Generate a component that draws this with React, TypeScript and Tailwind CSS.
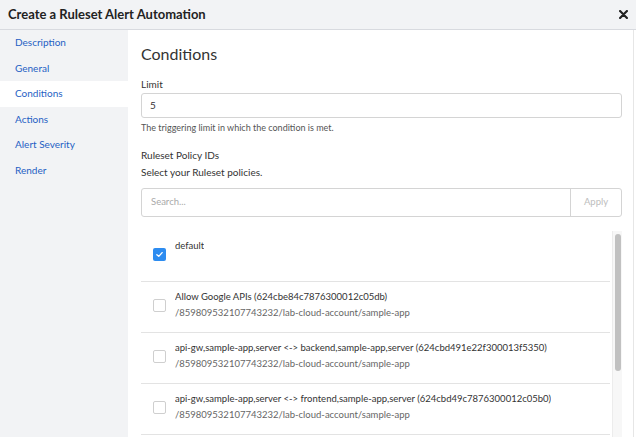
import React from "react";

type Policy = {
	id: string;
	title: string;
	path?: string;
	checked?: boolean;
};

const navItems = ["Description", "General", "Conditions", "Actions", "Alert Severity", "Render"];

const policies: Policy[] = [
	{ id: "default", title: "default", checked: true },
	{
		id: "624cbe84c7876300012c05db",
		title: "Allow Google APIs (624cbe84c7876300012c05db)",
		path: "/859809532107743232/lab-cloud-account/sample-app",
	},
	{
		id: "624cbd491e22f300013f5350",
		title: "api-gw,sample-app,server <-> backend,sample-app,server (624cbd491e22f300013f5350)",
		path: "/859809532107743232/lab-cloud-account/sample-app",
	},
	{
		id: "624cbd49c7876300012c05b0",
		title: "api-gw,sample-app,server <-> frontend,sample-app,server (624cbd49c7876300012c05b0)",
		path: "/859809532107743232/lab-cloud-account/sample-app",
	},
];

function Checkbox({ checked }: { checked?: boolean }) {
	if (checked) {
		return (
			<span className="flex h-[13px] w-[13px] shrink-0 items-center justify-center rounded-[2px] bg-[#2d8cf0]">
				<svg viewBox="0 0 12 12" className="h-[9px] w-[9px]">
					<path d="M2.5 6.2 L5 8.5 L9.5 3.5" fill="none" stroke="white" strokeWidth="1.8" strokeLinecap="round" strokeLinejoin="round" />
				</svg>
			</span>
		);
	}
	return <span className="h-[13px] w-[13px] shrink-0 rounded-[2px] border border-[#cfcfcf] bg-white" />;
}

export default function App() {
	return (
		<div className="flex h-[437px] w-[636px] flex-col overflow-hidden bg-white font-['Lato',sans-serif] text-[#333]">
			<header className="flex h-[30px] shrink-0 items-center justify-between border-b border-[#d8dadf] bg-[#f2f3f5] pl-[8px] pr-[8px]">
				<h1 className="text-[13px] font-bold text-[#222]">Create a Ruleset Alert Automation</h1>
				<svg viewBox="0 0 10 10" className="h-[9px] w-[9px]">
					<path d="M1.2 1.2 L8.8 8.8 M8.8 1.2 L1.2 8.8" stroke="#222" strokeWidth="2.4" strokeLinecap="round" />
				</svg>
			</header>

			<div className="flex min-h-0 flex-1">
				<nav className="w-[128px] shrink-0 bg-[#f2f3f5]">
					{navItems.map((item) => (
						<div
							key={item}
							className={`flex h-[25.5px] items-center pl-[15px] text-[10px] text-[#1f5fc4] ${
								item === "Conditions" ? "bg-white" : ""
							}`}
						>
							{item}
						</div>
					))}
				</nav>

				<main className="min-w-0 flex-1 pl-[13px] pr-[11px]">
					<h2 className="mt-[13px] text-[16px] leading-[22px] text-[#333]">Conditions</h2>

					<label className="mt-[12px] block text-[10px] leading-[14px] text-[#333]">Limit</label>
					<div className="mt-[2px] flex h-[25px] items-center rounded-[3px] border border-[#d4d4d4] px-[8px] text-[10px] text-[#333]">
						5
					</div>
					<p className="mt-[3px] text-[9px] leading-[14px] text-[#555]">
						The triggering limit in which the condition is met.
					</p>

					<p className="mt-[13px] text-[10px] leading-[14px] text-[#333]">Ruleset Policy IDs</p>
					<p className="mt-[3px] text-[10px] leading-[14px] text-[#333]">Select your Ruleset policies.</p>

					<div className="mt-[9px] flex h-[29px] rounded-[3px] border border-[#d4d4d4]">
						<div className="flex flex-1 items-center px-[9px] text-[9.5px] text-[#a9a9a9]">Search...</div>
						<div className="flex w-[51px] items-center justify-center border-l border-[#d4d4d4] text-[9.5px] text-[#bdbdbd]">
							Apply
						</div>
					</div>

					<div className="mt-[14px] flex h-[300px]">
						<ul className="min-w-0 flex-1 pr-[2px]">
							{policies.map((policy) => (
								<li key={policy.id} className="flex h-[51px] items-start border-b border-[#e3e3e3] pl-[12px] pt-[7px]">
									<div className="flex h-[32px] items-center">
										<Checkbox checked={policy.checked} />
									</div>
									<div className="ml-[9px] min-w-0 text-[9.5px] leading-[16px]">
										<div className="truncate text-[#333]">{policy.title}</div>
										{policy.path && <div className="truncate text-[#666]">{policy.path}</div>}
									</div>
								</li>
							))}
						</ul>
						<div className="w-[10px] shrink-0 border-l border-[#ececec] bg-[#f7f7f7] px-[1.5px] pt-[3px]">
							<div className="h-[137px] w-full rounded-full bg-[#c1c1c1]" />
						</div>
					</div>
				</main>

				<div className="w-[3px] shrink-0 border-l border-[#e6e6e6] bg-white" />
			</div>
		</div>
	);
}
